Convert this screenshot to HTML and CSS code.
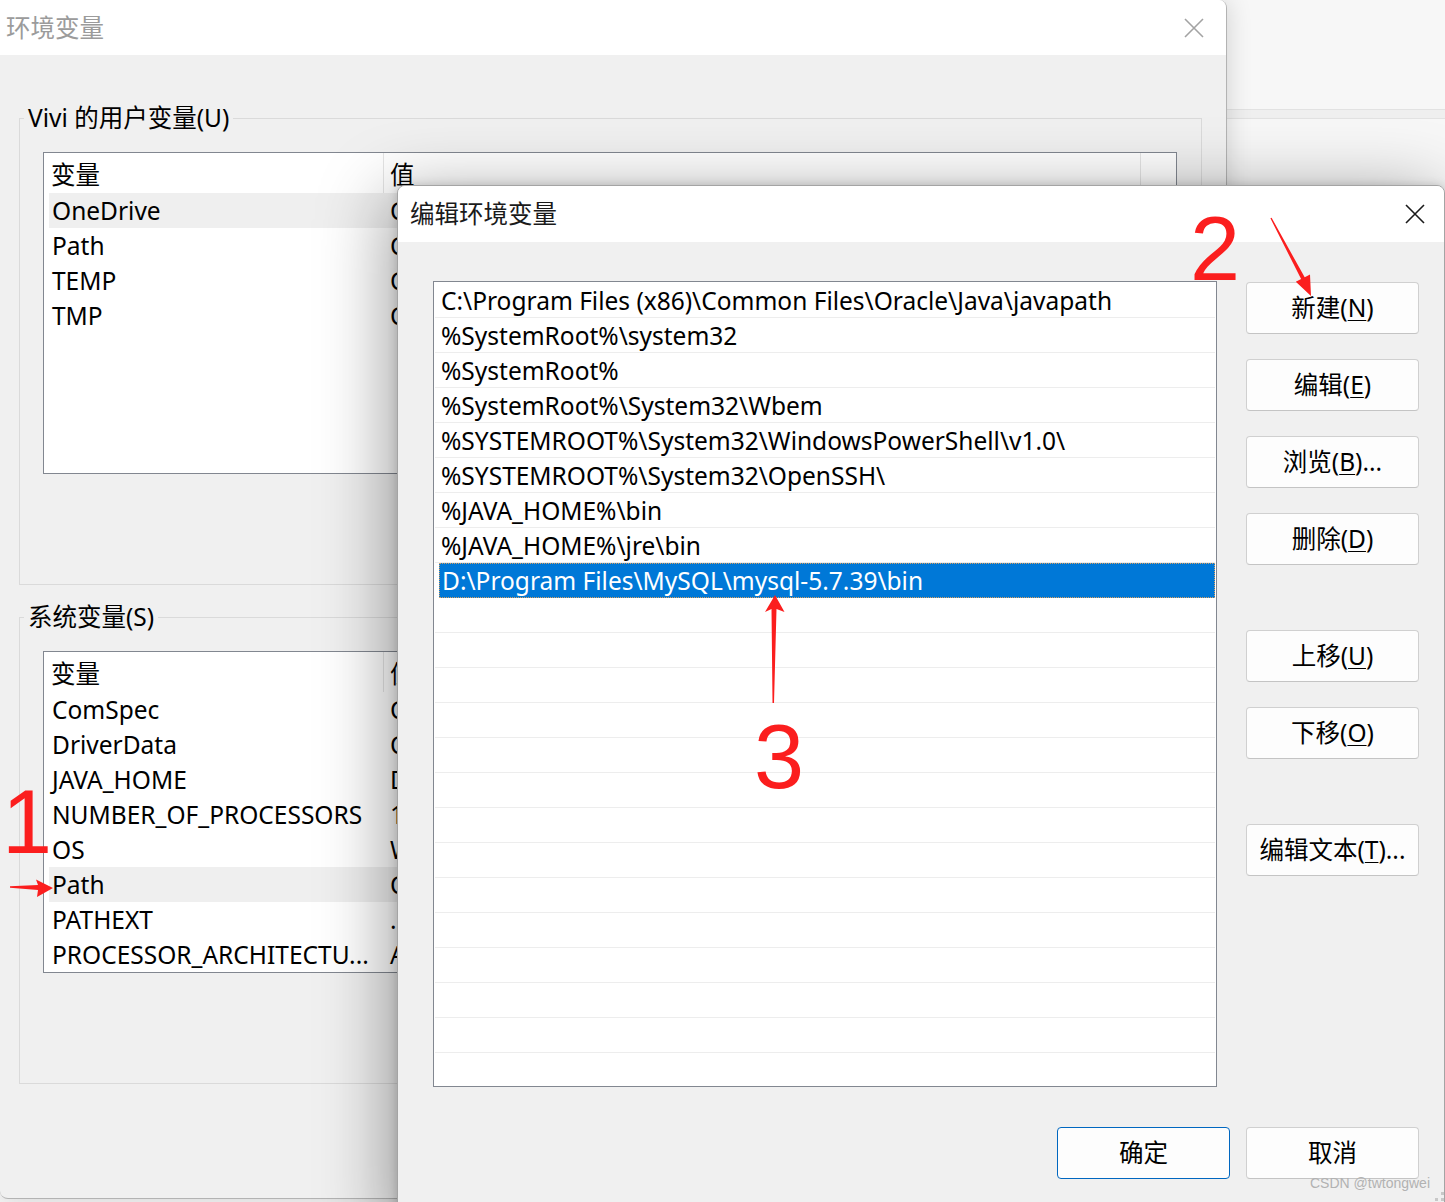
FILE: index.html
```html
<!DOCTYPE html>
<html lang="zh-CN">
<head>
<meta charset="utf-8">
<title>编辑环境变量</title>
<link rel="stylesheet" href="styles.css">
</head>
<body>
<div class="desktop">
  <div class="behind-win"></div>

  <section class="win env">
    <header class="env-titlebar">
      <span class="env-title">环境变量</span>
      <svg class="env-close" width="20" height="20" viewBox="0 0 20 20"><path d="M1 1 L19 19 M19 1 L1 19" stroke="#a3a3a3" stroke-width="1.6" fill="none"/></svg>
    </header>
    <div class="env-body">
      <div class="group">
        <div class="group-label">Vivi 的用户变量(U)</div>
        <div class="lv">
          <div class="lv-head"><span class="h1">变量</span><span class="h2">值</span><span class="h3"></span></div>
          <div class="lv-row hl"><span class="c1">OneDrive</span><span class="c2">C</span></div>
          <div class="lv-row"><span class="c1">Path</span><span class="c2">C</span></div>
          <div class="lv-row"><span class="c1">TEMP</span><span class="c2">C</span></div>
          <div class="lv-row"><span class="c1">TMP</span><span class="c2">C</span></div>
        </div>
      </div>
      <div class="group">
        <div class="group-label">系统变量(S)</div>
        <div class="lv">
          <div class="lv-head"><span class="h1">变量</span><span class="h2 short">值</span><span class="h3"></span></div>
          <div class="lv-row"><span class="c1">ComSpec</span><span class="c2">C</span></div>
          <div class="lv-row"><span class="c1">DriverData</span><span class="c2">C</span></div>
          <div class="lv-row"><span class="c1">JAVA_HOME</span><span class="c2">D</span></div>
          <div class="lv-row"><span class="c1">NUMBER_OF_PROCESSORS</span><span class="c2">1</span></div>
          <div class="lv-row"><span class="c1">OS</span><span class="c2">W</span></div>
          <div class="lv-row hl"><span class="c1">Path</span><span class="c2">C</span></div>
          <div class="lv-row"><span class="c1">PATHEXT</span><span class="c2">.</span></div>
          <div class="lv-row"><span class="c1">PROCESSOR_ARCHITECTU...</span><span class="c2">A</span></div>
        </div>
      </div>
    </div>
  </section>

  <section class="win dlg">
    <header class="dlg-titlebar">
      <span class="dlg-title">编辑环境变量</span>
      <svg class="dlg-close" width="20" height="20" viewBox="0 0 20 20"><path d="M1 1 L19 19 M19 1 L1 19" stroke="#1a1a1a" stroke-width="1.6" fill="none"/></svg>
    </header>
    <div class="dlg-body">
      <div class="dlg-main">
        <div class="pathlist">
          <div class="prow">C:\Program Files (x86)\Common Files\Oracle\Java\javapath</div>
          <div class="prow">%SystemRoot%\system32</div>
          <div class="prow">%SystemRoot%</div>
          <div class="prow">%SystemRoot%\System32\Wbem</div>
          <div class="prow">%SYSTEMROOT%\System32\WindowsPowerShell\v1.0\</div>
          <div class="prow">%SYSTEMROOT%\System32\OpenSSH\</div>
          <div class="prow">%JAVA_HOME%\bin</div>
          <div class="prow">%JAVA_HOME%\jre\bin</div>
          <div class="prow sel">D:\Program Files\MySQL\mysql-5.7.39\bin</div>
          <div class="prow"></div><div class="prow"></div><div class="prow"></div><div class="prow"></div>
          <div class="prow"></div><div class="prow"></div><div class="prow"></div><div class="prow"></div>
          <div class="prow"></div><div class="prow"></div><div class="prow"></div><div class="prow"></div>
          <div class="prow"></div><div class="prow"></div>
        </div>
        <div class="btncol">
          <div class="btn">新建(<span class="u">N</span>)</div>
          <div class="btn">编辑(<span class="u">E</span>)</div>
          <div class="btn">浏览(<span class="u">B</span>)...</div>
          <div class="btn">删除(<span class="u">D</span>)</div>
          <div class="btn sep">上移(<span class="u">U</span>)</div>
          <div class="btn">下移(<span class="u">O</span>)</div>
          <div class="btn sep">编辑文本(<span class="u">T</span>)...</div>
        </div>
      </div>
      <div class="dlg-foot">
        <div class="btn default">确定</div>
        <div class="btn">取消</div>
      </div>
    </div>
  </section>

  <svg class="annot" width="1445" height="1202" viewBox="0 0 1445 1202">
    <text x="2" y="853" class="num">1</text>
    <text x="1190" y="280" class="num">2</text>
    <text x="754" y="788" class="num">3</text>
    <path class="arrow" d="M10,886.3 L38,885 L36,879.5 L53,888 L37,897 L38,890 L10,887.7 Z"/>
    <path class="arrow" d="M1270.4,218.2 L1271.6,217.8 L1304.7,277.3 L1310,274.6 L1311,296 L1295.8,281.8 L1301.1,279.1 Z"/>
    <path class="arrow" d="M775,595 L784.5,612 L776.5,609 L774,703 L772.5,703 L771.5,609 L765,612 Z"/>
  </svg>

  <div class="wm">CSDN @twtongwei</div>
  <svg class="grip" width="10" height="10" viewBox="0 0 10 10"><rect x="6" y="0" width="3" height="3" fill="#c8c8c8"/><rect x="0" y="6" width="3" height="3" fill="#c8c8c8"/><rect x="6" y="6" width="3" height="3" fill="#c8c8c8"/></svg>
</div>
</body>
</html>
```

FILE: styles.css
```css
html, body {
  margin: 0;
  padding: 0;
  width: 100%;
  height: 100%;
  overflow: hidden;
}

body {
  font-family: "Noto Sans", "Noto Sans CJK SC", sans-serif;
  font-size: 24.5px;
  color: #000;
  background: #f6f6f6;
}

.desktop {
  position: relative;
  width: 1445px;
  height: 1202px;
  overflow: hidden;
  background: #f7f7f7;
}

.behind-win {
  position: absolute;
  left: 1226px;
  right: 0;
  top: 109px;
  height: 8px;
  border-top: 1px solid #e2e2e2;
  border-bottom: 1px solid #e2e2e2;
  background: #efefef;
}

.win {
  position: absolute;
  box-sizing: border-box;
  display: flex;
  flex-direction: column;
  overflow: hidden;
}

.u {
  text-decoration: underline;
  text-decoration-thickness: 1px;
  text-underline-offset: 3px;
}

/* ---------- back window ---------- */
.env {
  left: 0;
  top: 0;
  width: 1227px;
  height: 1199px;
  background: #f0f0f0;
  border-right: 1px solid #b3b3b3;
  border-bottom: 1px solid #b3b3b3;
  border-radius: 0 8px 8px 8px;
  box-shadow: 0 0 26px rgba(0, 0, 0, 0.16);
}

.env-titlebar {
  flex: none;
  height: 55px;
  background: #fff;
  display: flex;
  align-items: center;
  justify-content: space-between;
  padding-left: 6px;
  padding-right: 22px;
}

.env-title {
  color: #9b9b9b;
  line-height: 55px;
}

.env-body {
  padding: 63px 0 0 19px;
}

.group {
  width: 1183px;
  box-sizing: border-box;
  border: 1px solid #dadada;
  padding: 0 24px 110px 23px;
}

.group + .group {
  margin-top: 32px;
}

.group-label {
  width: fit-content;
  margin: -17px 0 0 -19px;
  padding: 0 4px;
  background: #f0f0f0;
  line-height: 32px;
  white-space: nowrap;
}

.lv {
  margin-top: 18px;
  width: 1134px;
  height: 322px;
  box-sizing: border-box;
  border: 1px solid #828790;
  background: #fff;
  overflow: hidden;
}

.lv-head {
  display: flex;
  height: 40px;
}

.lv-head span {
  box-sizing: border-box;
  height: 40px;
  padding-top: 4px;
  line-height: 36px;
  white-space: nowrap;
}

.lv-head .h1 {
  width: 340px;
  padding-left: 7px;
  border-right: 1px solid #e5e5e5;
}

.lv-head .h2 {
  width: 757px;
  padding-left: 6px;
  border-right: 1px solid #e5e5e5;
}

.lv-head .h2.short {
  width: auto;
  border-right: none;
}

.lv-head .h3 {
  flex: 1;
}

.lv-row {
  display: flex;
  height: 35px;
  line-height: 35px;
  margin: 0 5px;
  white-space: nowrap;
}

.lv-row.hl {
  background: #efefef;
}

.lv-row .c1 {
  width: 334px;
  flex: none;
  padding-left: 3px;
  box-sizing: border-box;
  overflow: hidden;
}

.lv-row .c2 {
  flex: none;
  padding-left: 7px;
}

/* ---------- edit dialog ---------- */
.dlg {
  left: 397px;
  top: 185px;
  width: 1048px;
  height: 1050px;
  background: #f0f0f0;
  border: 1px solid #a4a4a4;
  border-radius: 8px;
  box-shadow: -8px 10px 70px rgba(0, 0, 0, 0.38), 0 0 10px rgba(0, 0, 0, 0.16);
}

.dlg-titlebar {
  flex: none;
  height: 56px;
  background: #fff;
  display: flex;
  align-items: center;
  justify-content: space-between;
  padding-left: 12px;
  padding-right: 19px;
}

.dlg-title {
  color: #1a1a1a;
  line-height: 56px;
}

.dlg-body {
  padding: 39px 25px 0 35px;
}

.dlg-main {
  display: flex;
  align-items: flex-start;
  gap: 29px;
}

.pathlist {
  width: 784px;
  height: 806px;
  flex: none;
  box-sizing: border-box;
  border: 1px solid #828790;
  background: #fff;
  padding: 1px 1px 0;
  overflow: hidden;
}

.prow {
  height: 35px;
  box-sizing: border-box;
  border-bottom: 1px solid #ededed;
  line-height: 35px;
  padding-left: 6px;
  white-space: nowrap;
}

.prow.sel {
  margin-left: 4px;
  padding-left: 3px;
  background: #0078d7;
  border-bottom-color: #0078d7;
  color: #fff;
  outline: 1px dotted #d9a060;
  outline-offset: -1px;
}

.btncol {
  width: 173px;
  flex: none;
  display: flex;
  flex-direction: column;
  padding-top: 1px;
}

.btn {
  height: 52px;
  box-sizing: border-box;
  border: 1px solid #d0d0d0;
  border-bottom-color: #c4c4c4;
  border-radius: 4px;
  background: #fdfdfd;
  display: flex;
  align-items: center;
  justify-content: center;
  line-height: 1;
  white-space: nowrap;
}

.btncol .btn + .btn {
  margin-top: 25px;
}

.btncol .btn.sep {
  margin-top: 65px;
}

.dlg-foot {
  display: flex;
  justify-content: flex-end;
  gap: 16px;
  margin-top: 40px;
}

.dlg-foot .btn {
  width: 173px;
}

.btn.default {
  border-color: #0067c0;
}

/* ---------- annotations ---------- */
.annot {
  position: absolute;
  left: 0;
  top: 0;
  pointer-events: none;
}

.annot .num {
  font-family: "Liberation Sans", Arial, sans-serif;
  font-size: 90px;
  fill: #fb1e1e;
}

.annot .arrow {
  fill: #fb1e1e;
}

.wm {
  position: absolute;
  right: 15px;
  top: 1175px;
  font-family: "Liberation Sans", Arial, sans-serif;
  font-size: 14px;
  color: #b2b2b2;
}

.grip {
  position: absolute;
  right: 0;
  bottom: 0;
}
```
